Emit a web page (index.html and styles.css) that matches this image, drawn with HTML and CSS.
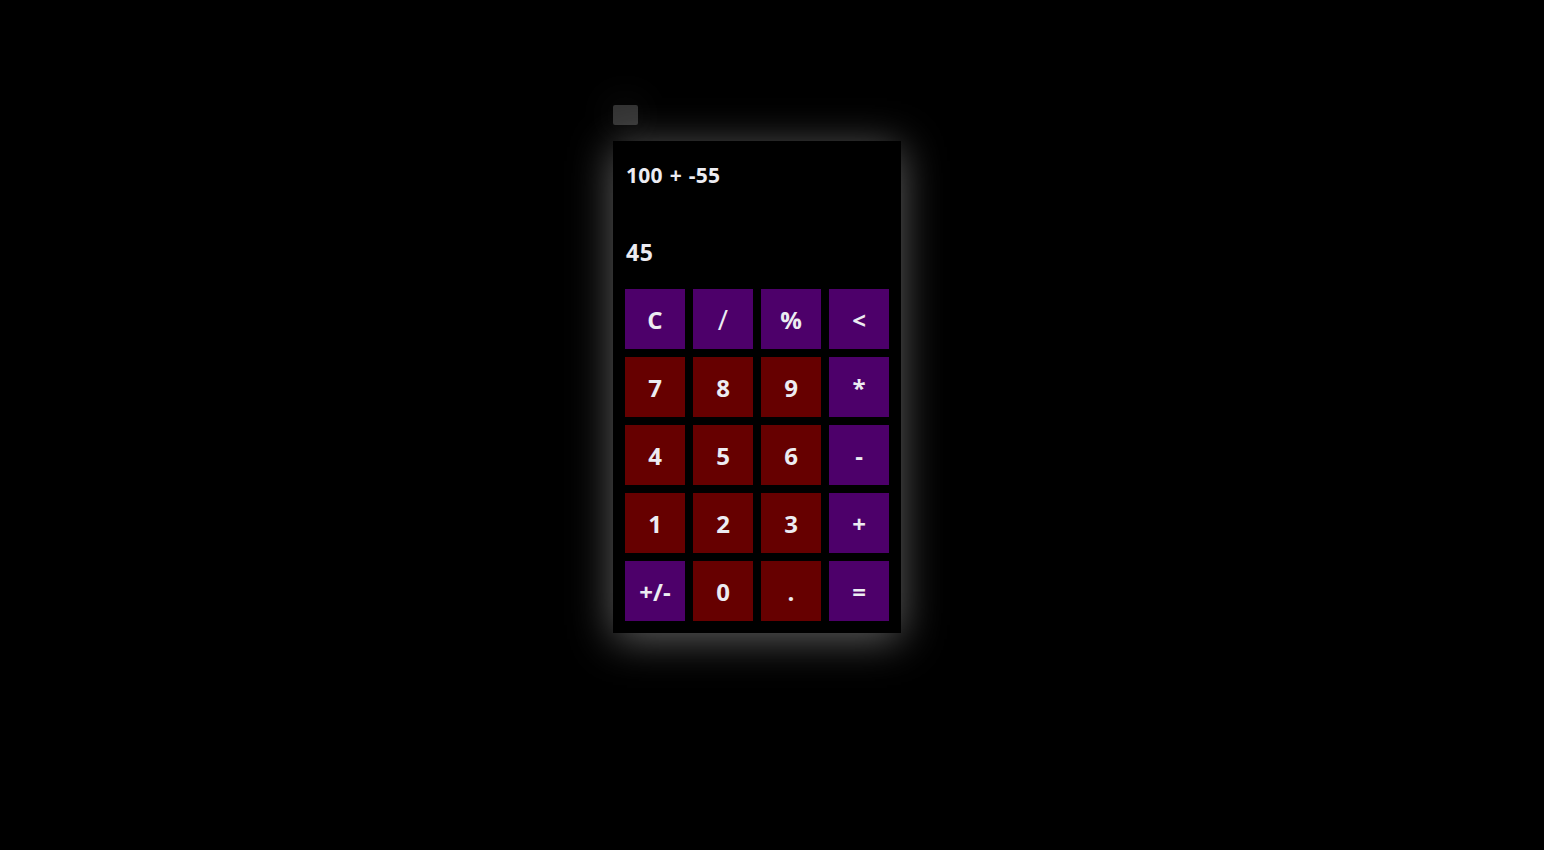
FILE: index.html
```html
<!DOCTYPE html>
<html>
<head>
<meta charset="utf-8">
<link rel="stylesheet" href="styles.css">
</head>
<body>
<div class="page">
  <button class="toggle" aria-label="toggle"></button>
  <div class="calc">
    <div class="display">
      <div class="expr">100 + -55</div>
      <div class="result">45</div>
    </div>
    <div class="keys">
      <button class="key op">C</button>
      <button class="key op slash">/</button>
      <button class="key op">%</button>
      <button class="key op">&lt;</button>
      <button class="key num">7</button>
      <button class="key num">8</button>
      <button class="key num">9</button>
      <button class="key op">*</button>
      <button class="key num">4</button>
      <button class="key num">5</button>
      <button class="key num">6</button>
      <button class="key op">-</button>
      <button class="key num">1</button>
      <button class="key num">2</button>
      <button class="key num">3</button>
      <button class="key op">+</button>
      <button class="key op">+/-</button>
      <button class="key num">0</button>
      <button class="key num">.</button>
      <button class="key op">=</button>
    </div>
  </div>
</div>
</body>
</html>
```
FILE: styles.css
```css
html, body {
  margin: 0;
  background: #000;
  height: 100%;
}
body {
  font-family: "Open Sans", "DejaVu Sans", sans-serif;
  color: #ececf2;
}
.page {
  padding: 105px 0 0 613px;
  display: flex;
  flex-direction: column;
  align-items: flex-start;
}
.toggle {
  width: 25px;
  height: 20px;
  border: none;
  border-radius: 2px;
  background: #333;
  padding: 0;
  margin: 0 0 16px 0;
  box-shadow: 0 0 40px rgba(255, 255, 255, 0.12);
}
.calc {
  width: 288px;
  box-sizing: border-box;
  padding: 12px;
  background: #000;
  box-shadow: 0 6px 40px rgba(255, 255, 255, 0.38);
}
.display {
  height: 136px;
  display: flex;
  flex-direction: column;
  justify-content: space-between;
  box-sizing: border-box;
  padding: 8px 0 22px 1px;
}
.expr {
  font-size: 21px;
  font-weight: 700;
  line-height: 28px;
  word-spacing: 1px;
  letter-spacing: 0.3px;
}
.result {
  font-size: 23px;
  font-weight: 700;
  line-height: 30px;
  letter-spacing: 0.5px;
}
.keys {
  display: grid;
  grid-template-columns: repeat(4, 60px);
  grid-auto-rows: 60px;
  gap: 8px;
}
.key {
  border: none;
  padding: 0;
  margin: 0;
  font-family: "Open Sans", "DejaVu Sans", sans-serif;
  font-weight: 700;
  font-size: 24px;
  color: #ececf2;
}
.key.op { background: #4d006a; }
.key.num { background: #660000; }
.key.slash { font-weight: 400; font-size: 28px; }
```
